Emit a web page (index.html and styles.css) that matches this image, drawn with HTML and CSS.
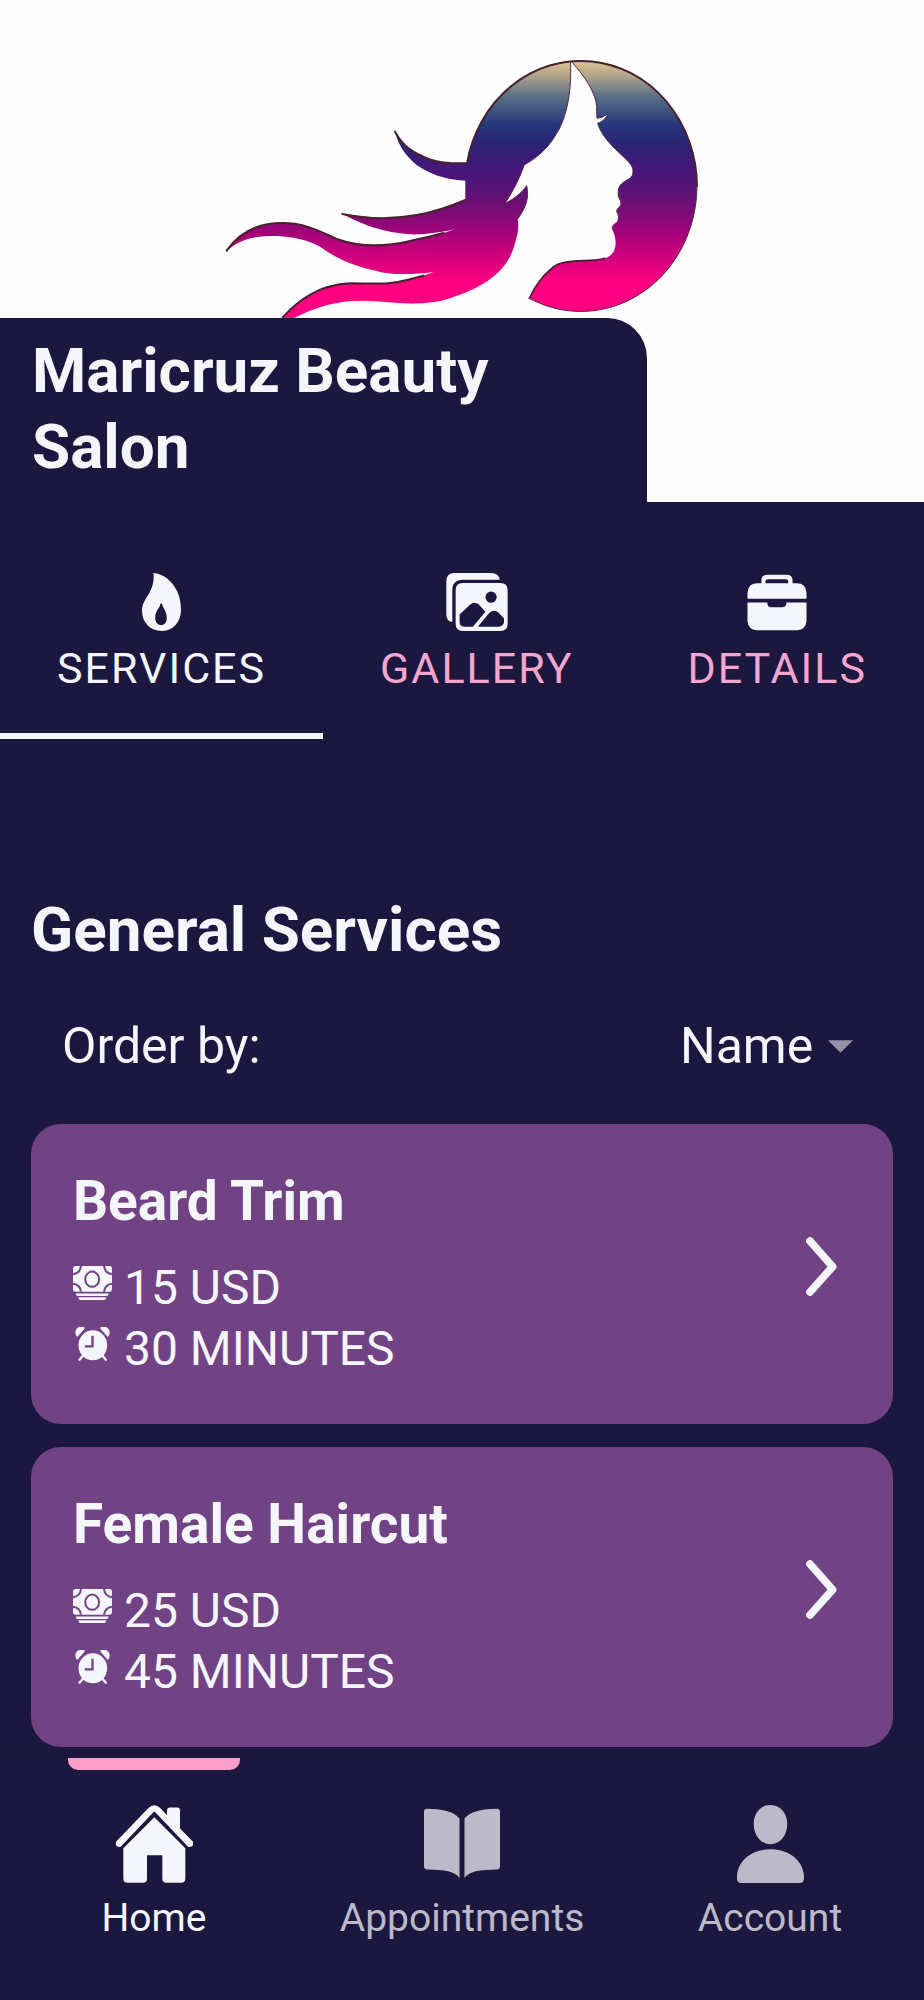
FILE: index.html
```html
<!DOCTYPE html>
<html lang="en">
<head>
    <meta charset="UTF-8">
    <meta name="viewport" content="width=device-width, initial-scale=1.0">
    <title>Maricruz Beauty Salon</title>
    <link rel="stylesheet" href="styles.css">
</head>
<body>
    <!-- shared icons for the service cards -->
    <svg class="sprite" aria-hidden="true">
        <symbol id="money" viewBox="0 0 118 103">
            <rect width="118" height="78" rx="8" fill="currentColor"/>
            <g fill="none" stroke="#714385" stroke-width="6">
                <ellipse cx="58" cy="40" rx="21" ry="23"/>
                <path d="M0 25Q22 22 24 0M118 25Q96 22 94 0M0 54Q22 57 24 78M118 54Q96 57 94 78"/>
            </g>
            <path d="M8 83h100q-1 8-6 8H14q-5 0-6-8zM16 95h85q-1 8-6 8H22q-5 0-6-8z" fill="currentColor"/>
        </symbol>
        <symbol id="clock" viewBox="0 0 102 102">
            <path d="M5 27C-5 10 10-4 26 3ZM97 27C107 10 92-4 76 3Z" fill="currentColor" stroke="currentColor" stroke-width="4" stroke-linejoin="round"/>
            <path d="M24 84 12 98M79 84 91 98" stroke="currentColor" stroke-width="7" stroke-linecap="round"/>
            <ellipse cx="52" cy="55" rx="43" ry="45" fill="currentColor"/>
            <path d="M51 26V58H28" fill="none" stroke="#714385" stroke-width="7"/>
        </symbol>
        <symbol id="chevron" viewBox="0 0 93 177">
            <path d="M12 12 80 89 12 165" fill="none" stroke="currentColor" stroke-width="23" stroke-linecap="round" stroke-linejoin="round"/>
        </symbol>
    </svg>

    <header class="hero">
        <svg class="hero-logo" viewBox="0 0 924 502" role="img" aria-label="Salon logo">
            <defs>
                <linearGradient id="hair" gradientUnits="userSpaceOnUse" x1="0" y1="60" x2="0" y2="760">
                    <stop offset="0" stop-color="#dcc794"/>
                    <stop offset=".06" stop-color="#b5a88b"/>
                    <stop offset=".16" stop-color="#586e85"/>
                    <stop offset=".28" stop-color="#24357a"/>
                    <stop offset=".36" stop-color="#2c2475"/>
                    <stop offset=".48" stop-color="#48167a"/>
                    <stop offset=".6" stop-color="#661073"/>
                    <stop offset=".72" stop-color="#9a0479"/>
                    <stop offset=".84" stop-color="#cf007d"/>
                    <stop offset=".96" stop-color="#ff0080"/>
                </linearGradient>
            </defs>
            <g transform="translate(210 40) scale(.3333)">
                <g fill="url(#hair)">
                    <path d="M1086 66C1125 110 1158 160 1160 200L1161 235Q1180 234 1195 220Q1184 244 1163 250C1175 290 1210 322 1240 350C1260 368 1269 380 1269 392C1270 405 1265 412 1257 417C1240 425 1227 435 1225 450C1224 465 1224 468 1228 475C1234 485 1234 492 1231 498C1225 503 1220 508 1220 515C1226 522 1227 535 1223 545C1215 550 1205 558 1207 568C1212 580 1217 590 1217 610C1216 635 1205 648 1185 655C1165 662 1130 661 1085 664C1055 666 1035 672 1020 690C990 715 970 750 958 775A348 377 0 0 0 1461 438A348 377 0 0 0 1086 62Z"/>
                    <path d="M1081 63L1082 110C1080 190 1060 250 1040 280C1015 325 985 350 943 375C930 410 915 445 885 490C910 478 935 460 950 437C958 470 950 500 923 537C927 560 925 580 915 610C895 690 830 740 720 775C660 796 580 792 500 784C390 775 320 800 250 835L190 870L218 832C270 775 330 735 420 730C500 730 540 735 600 718C640 708 660 700 672 696C600 705 540 705 500 693C420 675 380 655 330 620C280 592 220 588 180 588C120 590 90 600 50 632C90 575 150 548 220 549C290 550 330 575 380 597C450 622 520 622 600 603C650 592 700 580 738 567C680 580 620 588 570 580C500 570 450 550 397 522C460 535 540 540 620 525C680 515 720 500 766 480V422C700 418 660 402 620 375C585 345 565 315 555 275C580 320 610 340 660 358C700 372 735 370 771 370A348 377 0 0 1 1081 63Z"/>
                </g>
                <!-- dark edge along the top of each lock -->
                <g fill="none" stroke="#48202e" stroke-width="6" stroke-linecap="round">
                    <path d="M555 275C580 320 610 340 660 358C700 372 735 370 771 370A348 377 0 0 1 1461 438"/>
                    <path d="M397 522C460 535 540 540 620 525C680 515 720 500 766 480M50 632C90 575 150 548 220 549C290 550 330 575 380 597C450 622 520 622 600 603C640 594 660 590 700 579M218 832C270 775 330 735 420 730C500 730 540 735 600 718L640 707"/>
                    <path d="M958 775C970 750 990 715 1020 690C1035 672 1055 666 1085 664C1130 661 1165 662 1185 655" stroke-width="5"/>
                </g>
                <g fill="none" stroke="#5e2448" stroke-width="3">
                    <path d="M1082 65V110C1080 190 1060 250 1040 280C1015 325 985 350 943 375C930 410 915 445 885 490C910 478 935 460 950 437C958 470 950 500 923 537M1461 438A348 377 0 0 1 958 775"/>
                    <path d="M1086 66C1125 110 1158 160 1160 200L1161 235Q1180 234 1195 220Q1184 244 1163 250C1175 290 1210 322 1240 350C1260 368 1269 380 1269 392C1270 405 1265 412 1257 417C1240 425 1227 435 1225 450C1224 465 1224 468 1228 475C1234 485 1234 492 1231 498C1225 503 1220 508 1220 515C1226 522 1227 535 1223 545C1215 550 1205 558 1207 568"/>
                </g>
            </g>
        </svg>
        <h1 class="hero-title">Maricruz Beauty Salon</h1>
    </header>

    <nav class="tabs" aria-label="Sections">
        <button class="tab active" type="button">
            <svg width="39" height="58" viewBox="0 0 118 175"><path fill="currentColor" fill-rule="evenodd" d="M35 0C75 3 118 45 118 110C118 150 92 175 60 175C25 175 0 150 0 114C0 75 40 60 35 0ZM56 92C53 108 40 113 40 135C40 150 48 157 58 157C68 157 75 150 75 135C75 115 64 108 60 92Z"/></svg>
            SERVICES
        </button>
        <button class="tab" type="button">
            <svg width="62" height="58" viewBox="0 0 185 175"><path fill="currentColor" fill-rule="evenodd" d="M0 25Q0 0 25 0H135Q158 0 161 20H50Q18 20 18 52V148Q0 145 0 125ZM50 30H163Q185 30 185 52V153Q185 175 163 175H50Q28 175 28 153V52Q28 30 50 30ZM118 73A17 17 0 0 0 152 73A17 17 0 0 0 118 73ZM40 125L72 95Q85 84 98 95L118 117L80 162H52Q40 160 40 148ZM95 162L130 120Q145 108 158 120L174 137V148Q172 160 160 162Z"/></svg>
            GALLERY
        </button>
        <button class="tab" type="button">
            <svg width="60" height="58" viewBox="0 -5 178 175"><path fill="currentColor" d="M42 28V18Q42 0 60 0H118Q136 0 136 18V28H123V20Q122 14 116 14H62Q55 14 54 20V28ZM0 73V54Q2 26 30 26H148Q176 26 178 54V73ZM0 84H60V90Q62 98 70 98H106Q114 98 117 90V84H178V140Q176 166 150 168H28Q2 166 0 140Z"/></svg>
            DETAILS
        </button>
    </nav>

    <main class="services">
        <h2>General Services</h2>

        <div class="order">
            <label for="order">Order by:</label>
            <div class="order-select">
                <select id="order">
                    <option value="name">Name</option>
                </select>
                <svg width="25" height="13" viewBox="0 0 26 13"><path d="M0 0H26L13 13Z" fill="#9490a6"/></svg>
            </div>
        </div>

        <a class="card" href="#beard-trim">
            <div>
                <h3>Beard Trim</h3>
                <p><svg class="icon-money"><use href="#money"/></svg>15 USD</p>
                <p><svg class="icon-clock"><use href="#clock"/></svg>30 MINUTES</p>
            </div>
            <svg class="chevron"><use href="#chevron"/></svg>
        </a>

        <a class="card" href="#female-haircut">
            <div>
                <h3>Female Haircut</h3>
                <p><svg class="icon-money"><use href="#money"/></svg>25 USD</p>
                <p><svg class="icon-clock"><use href="#clock"/></svg>45 MINUTES</p>
            </div>
            <svg class="chevron"><use href="#chevron"/></svg>
        </a>
    </main>

    <nav class="bottom-nav" aria-label="Main">
        <a class="active" href="#home">
            <svg width="77" height="78" viewBox="0 0 231 233"><path fill="currentColor" d="M0 110L98 8Q115 -7 132 8L153 30V15Q154 7 162 7H184Q192 7 192 15V70L231 110V120Q229 126 216 125L115 18L14 125Q2 126 0 120ZM22 129L115 36L208 129V220Q208 233 195 233H152Q139 233 139 220V150H93V220Q93 233 80 233H35Q22 233 22 220Z"/></svg>
            Home
        </a>
        <a href="#appointments">
            <svg width="76" height="78" viewBox="0 -10 229 233"><path fill="currentColor" d="M0 8Q0 0 10 0C50 0 92 8 107 30V209C95 188 60 184 10 183Q0 182 0 174ZM229 8Q229 0 219 0C179 0 137 8 122 30V209C134 188 169 184 219 183Q229 182 229 174Z"/></svg>
            Appointments
        </a>
        <a href="#account">
            <svg width="67" height="78" viewBox="0 0 200 233"><path fill="currentColor" d="M100 0C130 0 150 25 150 56C150 90 130 117 100 117C70 117 50 90 50 56C50 25 70 0 100 0ZM0 210C5 160 50 132 100 132C150 132 195 160 200 210V222Q199 233 187 233H13Q1 233 0 222Z"/></svg>
            Account
        </a>
    </nav>
</body>
</html>
```
FILE: styles.css
```css
*,
*::before,
*::after {
    box-sizing: border-box;
}
body {
    display: flex;
    flex-direction: column;
    min-height: 100vh;
    margin: 0;
    font-family: Roboto, "Liberation Sans", sans-serif;
    background-color: #1c173f;
    color: #f5f5fc;
}
h1, h2, h3, p {
    margin: 0;
}
svg {
    display: block;
    flex-shrink: 0;
}
.sprite {
    position: absolute;
    width: 0;
    height: 0;
}

/* logo with the name panel over its lower left corner */
.hero {
    display: grid;
    background-color: #fefefe;
}
.hero-logo,
.hero-title {
    grid-area: 1 / 1;
}
.hero-logo {
    width: 100%;
    height: auto;
}
.hero-title {
    align-self: end;
    width: 70%;
    padding: 15px 32px 17px;
    border-top-right-radius: 40px;
    background-color: #1c173f;
    font-size: 62px;
    line-height: 76px;
}

.tabs {
    display: flex;
}
.tab {
    display: flex;
    flex: 1 1 auto;
    flex-direction: column;
    align-items: center;
    gap: 12px;
    padding: 71px 0 40px;
    border: 0;
    border-bottom: 6px solid transparent;
    background: none;
    color: #f5a6cf;
    font: inherit;
    font-size: 43px;
    line-height: 50px;
    letter-spacing: 2px;
    cursor: pointer;
}
.tab svg {
    color: #f5f5fc;
}
.tab.active {
    border-bottom-color: #f5f5fc;
    color: #f5f5fc;
}

.services {
    display: flex;
    flex-direction: column;
    flex: 1;
    padding: 153px 31px 10px;
}
.services h2 {
    font-size: 62px;
    line-height: 76px;
}
.order {
    display: flex;
    justify-content: space-between;
    padding: 48px 40px 48px 31px;
    font-size: 50px;
    line-height: 60px;
}
.order-select {
    display: flex;
    align-items: center;
    gap: 14px;
}
.order-select select {
    appearance: none;
    padding: 0;
    border: 0;
    background: none;
    color: inherit;
    font: inherit;
}

.card {
    display: flex;
    align-items: center;
    justify-content: space-between;
    padding: 45px 56px 45px 42px;
    border-radius: 30px;
    background-color: #714385;
    color: inherit;
    text-decoration: none;
}
.card + .card {
    margin-top: 23px;
}
.card h3 {
    margin-bottom: 24px;
    font-size: 55px;
    line-height: 64px;
}
.card p {
    display: flex;
    align-items: center;
    gap: 12px;
    font-size: 48px;
    line-height: 61px;
}
.icon-money,
.icon-clock {
    width: 39px;
    height: 34px;
    margin-bottom: 10px;
}
.chevron {
    width: 31px;
    height: 59px;
    margin-bottom: 16px;
}

.bottom-nav {
    position: sticky;
    bottom: 0;
    display: grid;
    grid-template-columns: repeat(3, 1fr);
    border-top: 1px solid #19143a;
    background-color: #1c173f;
}
.bottom-nav a {
    display: flex;
    flex-direction: column;
    align-items: center;
    padding-bottom: 60px;
    color: #bcb9c9;
    font-size: 39px;
    line-height: 44px;
    text-decoration: none;
}
.bottom-nav a::before {
    content: "";
    width: 56%;
    height: 12px;
    margin-bottom: 35px;
    border-radius: 0 0 10px 10px;
}
.bottom-nav svg {
    margin-bottom: 13px;
}
.bottom-nav .active {
    color: #f5f5fc;
}
.bottom-nav .active::before {
    background-color: #ff9fc9;
}
```
